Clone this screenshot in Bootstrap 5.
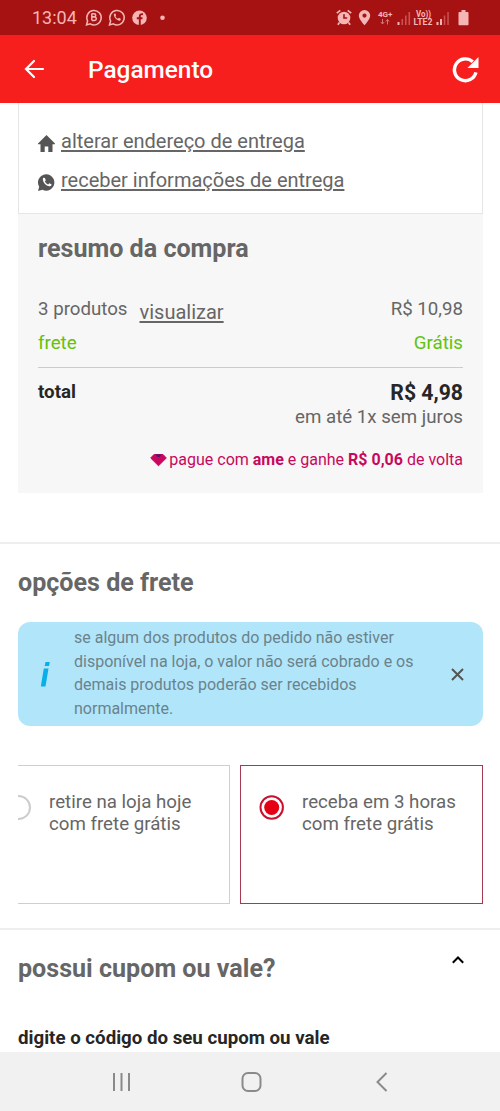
<!DOCTYPE html>
<html lang="pt-BR">
<head>
<meta charset="utf-8">
<meta name="viewport" content="width=device-width, initial-scale=1">
<title>Pagamento</title>
<link rel="stylesheet" href="https://cdn.jsdelivr.net/npm/bootstrap@5.3.0/dist/css/bootstrap.min.css">
<style>
body{font-family:Roboto,"Liberation Sans",sans-serif;font-size:18.7px;line-height:22px;color:#666;background:#fff}
svg{display:block;flex:none}
.screen{width:500px;height:1111px}
.status{height:35px;background:#a61212;color:#f5b5b5;padding:0 30px 0 32px;font-size:18px}
.appbar{height:68px;background:#f71e1e;color:#fff;padding:0 21px 0 24px}
.appbar h1{font-size:24.4px;font-weight:500;line-height:30px;margin:2px 0 0 43px}
.address{height:111px;margin:0 17px 0 18px;border:1px solid #e6e6e6;border-top:0;padding:24px 19px 0}
.address a,.view-link{color:#666;font-size:20px;line-height:28px;text-underline-offset:2px;text-decoration-thickness:1.5px}
.address .line{height:39px;gap:6px}
.address svg{margin-top:8px}
.summary{height:279px;margin:0 17px 0 18px;background:#f7f7f7;padding:20px 20px 0}
.heading{font-size:25.1px;line-height:30px;font-weight:700;margin:0}
.items{margin-top:34px;height:28px}
.view-link{margin-left:12px}
.shipping{margin-top:6px;color:#62c30d}
.totals{margin-top:13px;padding-top:13px;border-top:1px solid #ccc;height:39px}
.grand{font-size:21.2px;line-height:23px}
.dark{color:#262626}
.ame{color:#c7085e;font-size:16px;line-height:20px;margin-top:22px;gap:2px}
.section-rule{border-top:2px solid #eee}
.shipping-block{margin-top:49px}
.shipping-block .heading{padding:24px 18px 0}
.notice{height:104px;margin:24px 17px 0 18px;padding:4px 19px 0 22px;border-radius:12px;background:#b1e6fa;font-size:16px;line-height:23.7px;color:#6b828c}
.notice p{width:350px;margin-left:23px}
.info-icon{margin-top:35px}
.close-icon{margin-top:42px}
.options{margin:39px 17px 0 18px;gap:10px}
.option{height:139px;border:1px solid #d3ccd0;padding-top:25px}
.option svg{margin-top:4px}
.option.first{width:212px;border-left:0;gap:18px}
.option.chosen{width:243px;border-color:#a53a52;padding-left:18px;gap:17px}
.coupon-block{margin-top:24px;padding:24px 36px 0 18px}
.coupon-block .chevron{margin-top:2px}
.coupon-label{margin-top:43px}
.softnav{height:59px;background:#f1f1f1}
</style>
</head>
<body>
<div class="screen d-flex flex-column overflow-hidden">
  <header>
    <div class="status d-flex align-items-center">
      <span>13:04</span>
      <svg class="ms-2" width="90" height="20" viewBox="0 0 90 20" fill="none" stroke="#f5b5b5" stroke-width="1.5">
        <path d="M1.500 17 2.600 13A7.200 7.200 0 1 1 5.300 15.900Z"/>
        <path d="M6.800 5.600v7M6.800 5.800h2.400a1.500 1.500 0 0 1 0 3H7M7 9h2.600a1.600 1.600 0 0 1 0 3.400H7"/>
        <path d="M24.500 17 25.600 13A7.200 7.200 0 1 1 28.300 15.900Z"/>
        <path d="M29 5.800C28 8.700 32 13 35 12.800L36 10.900 33.900 9.800 32.900 10.800C31.500 10 30.900 9.200 30.500 8.200L31.100 7.300 30.300 5.500Z" fill="#f5b5b5" stroke="none"/>
        <circle cx="54.500" cy="9.800" r="7.300" fill="#f5b5b5" stroke="none"/>
        <path d="M54.800 17.500V8.500q0-2.800 3.200-2.300M51.800 10.300h5.700" stroke="#a61212" stroke-width="1.900"/>
        <circle cx="77.500" cy="9.800" r="2.300" fill="#f5b5b5" stroke="none"/>
      </svg>
      <svg class="ms-auto" width="134" height="20" viewBox="0 0 134 20" fill="#f5b5b5">
        <circle cx="8" cy="10" r="6.300"/><path d="M.8 5.200 4.300 2.300M15.200 5.200 11.700 2.300M3.500 14.500 1.800 16.800M12.500 14.500l1.700 2.300" stroke="#f5b5b5" stroke-width="1.700"/>
        <path d="M8 6.200V10h3.200" fill="none" stroke="#a61212" stroke-width="1.600"/>
        <path fill-rule="evenodd" d="M28.500 2a5.700 5.700 0 0 1 5.700 5.700C34.200 11 28.500 17.300 28.500 17.300S22.800 11 22.800 7.700A5.700 5.700 0 0 1 28.500 2Zm0 3.500a2.100 2.100 0 1 0 0 4.200 2.100 2.100 0 0 0 0-4.200Z"/>
        <text x="42" y="9" font-size="8" font-weight="700" textLength="14.500" lengthAdjust="spacingAndGlyphs">4G+</text>
        <path d="M46.500 11v5M44.800 14l1.700 2 1.700-2M51.500 16.500v-5M49.800 13.500l1.700-2 1.700 2" fill="none" stroke="#d87575"/>
        <path d="M61.500 14h2v3h-2z"/><path d="M65.500 11h1.600v6h-1.600zM69 7.500h1.600V17H69zM72.500 4h1.600v13h-1.600z" fill="#c95353"/>
        <text x="80" y="9" font-size="8.500" font-weight="700" textLength="15" lengthAdjust="spacingAndGlyphs">Vo))</text>
        <text x="77.500" y="17.300" font-size="9" font-weight="700" textLength="19" lengthAdjust="spacingAndGlyphs">LTE2</text>
        <path d="M100.500 14h2v3h-2zM104 11h2v6h-2z"/><path d="M107.800 7.500h1.500V17h-1.500zM111.300 4h1.500v13h-1.500z" fill="#c95353"/>
        <path d="M125.500 2h4v2h2.300q.7 0 .7.700V16.500q0 .7-.7.700h-8.600q-.7 0-.7-.7V4.700q0-.7.700-.7h2.300z"/>
      </svg>
    </div>
    <div class="appbar d-flex align-items-center">
      <svg width="21" height="20" viewBox="0 0 21 20" fill="none" stroke="#fff" stroke-width="2.200" stroke-linecap="round"><path d="M19 10H2M10 2 2 10l8 8"/></svg>
      <h1>Pagamento</h1>
      <svg class="ms-auto" width="27" height="27" viewBox="0 0 28 28"><path d="M24.800 17A11.300 11.300 0 1 1 21.500 6" fill="none" stroke="#fff" stroke-width="3.600"/><path d="M27.500 1V12.500H16Z" fill="#fff"/></svg>
    </div>
  </header>
  <main class="flex-grow-1 overflow-hidden">
    <section class="address">
      <div class="line d-flex align-items-start">
        <svg width="17" height="17" viewBox="0 0 17 17" fill="#555"><path d="M8.500 0 17 8.500V9.300H14.500V17H10.300V11.500H6.700V17H2.500V9.300H0V8.500Z"/></svg>
        <a href="#">alterar endereço de entrega</a>
      </div>
      <div class="line d-flex align-items-start">
        <svg width="17" height="17" viewBox="0 0 17 17"><path d="M0 17 1.200 12.800A8.200 8.200 0 1 1 4.500 15.800Z" fill="#555"/><path d="M5.300 3.700C3.500 6 7.500 12.700 12 12.300 13.300 12 13.600 11 13.400 10.200L11.300 9.200 10.200 10.500C8.700 10 7.600 8.900 6.900 7.500L7.800 6.300 6.900 4Z" fill="#fff"/></svg>
        <a href="#">receber informações de entrega</a>
      </div>
    </section>
    <section class="summary">
      <h2 class="heading">resumo da compra</h2>
      <div class="items d-flex align-items-start">
        <span>3 produtos</span><a class="view-link" href="#">visualizar</a><span class="ms-auto">R$ 10,98</span>
      </div>
      <div class="shipping d-flex justify-content-between"><span>frete</span><span>Grátis</span></div>
      <div class="totals d-flex justify-content-between align-items-start dark fw-bold"><span>total</span><span class="grand">R$ 4,98</span></div>
      <div class="text-end">em até 1x sem juros</div>
      <div class="ame d-flex justify-content-end">
        <svg class="mt-1" width="17" height="13" viewBox="0 0 17 13"><path d="M4 .5h9L16.300 4 8.500 11.800.7 4Z" fill="#c7085e" stroke="#c7085e" stroke-linejoin="round"/><path d="M5.500.5h6l-2 2.500h-2Z" fill="#3b1d78"/></svg>
        <span>pague com <b>ame</b> e ganhe <b>R$ 0,06</b> de volta</span>
      </div>
    </section>
    <section class="section-rule shipping-block">
      <h2 class="heading">opções de frete</h2>
      <div class="notice d-flex align-items-start">
        <svg class="info-icon" width="11" height="26" viewBox="0 0 11 26" fill="#0aaee8"><path d="M5.500 1h4.300L9 5H4.700zM3.800 7.500H8.500L5.500 25.500H.8z"/></svg>
        <p class="mb-0">se algum dos produtos do pedido não estiver disponível na loja, o valor não será cobrado e os demais produtos poderão ser recebidos normalmente.</p>
        <svg class="close-icon ms-auto" width="13" height="13" viewBox="0 0 13 13" stroke="#555" stroke-width="2"><path d="m1 1 11 11M12 1 1 12"/></svg>
      </div>
      <div class="options d-flex">
        <div class="option first d-flex align-items-start">
          <svg width="13" height="26" viewBox="0 0 13 26"><circle cx=".5" cy="12.500" r="11.500" fill="none" stroke="#ccc" stroke-width="2"/></svg>
          <span>retire na loja hoje<br>com frete grátis</span>
        </div>
        <div class="option chosen d-flex align-items-start">
          <svg width="26" height="26" viewBox="0 0 26 26"><circle cx="12.700" cy="12.500" r="11.200" fill="none" stroke="#c9102c" stroke-width="2"/><circle cx="12.700" cy="12.500" r="7.500" fill="#e60014"/></svg>
          <span>receba em 3 horas<br>com frete grátis</span>
        </div>
      </div>
    </section>
    <section class="section-rule coupon-block">
      <div class="d-flex justify-content-between align-items-start">
        <h2 class="heading">possui cupom ou vale?</h2>
        <svg class="chevron" width="12" height="8" viewBox="0 0 12 8" fill="none" stroke="#000" stroke-width="2"><path d="M.8 6.800 6 1.500l5.200 5.300"/></svg>
      </div>
      <div class="coupon-label dark fw-bold">digite o código do seu cupom ou vale</div>
    </section>
  </main>
  <footer class="softnav d-flex align-items-center">
    <svg width="500" height="22" viewBox="0 0 500 22" fill="none" stroke="#8a8a8a" stroke-width="2">
      <path d="M114 2v18M121.500 2v18M129 2v18"/>
      <rect x="242.500" y="2" width="18" height="18" rx="5.500"/>
      <path d="M386.500 2 377.500 11l9 9"/>
    </svg>
  </footer>
</div>
<script src="https://cdn.jsdelivr.net/npm/bootstrap@5.3.0/dist/js/bootstrap.bundle.min.js"></script>
</body>
</html>
